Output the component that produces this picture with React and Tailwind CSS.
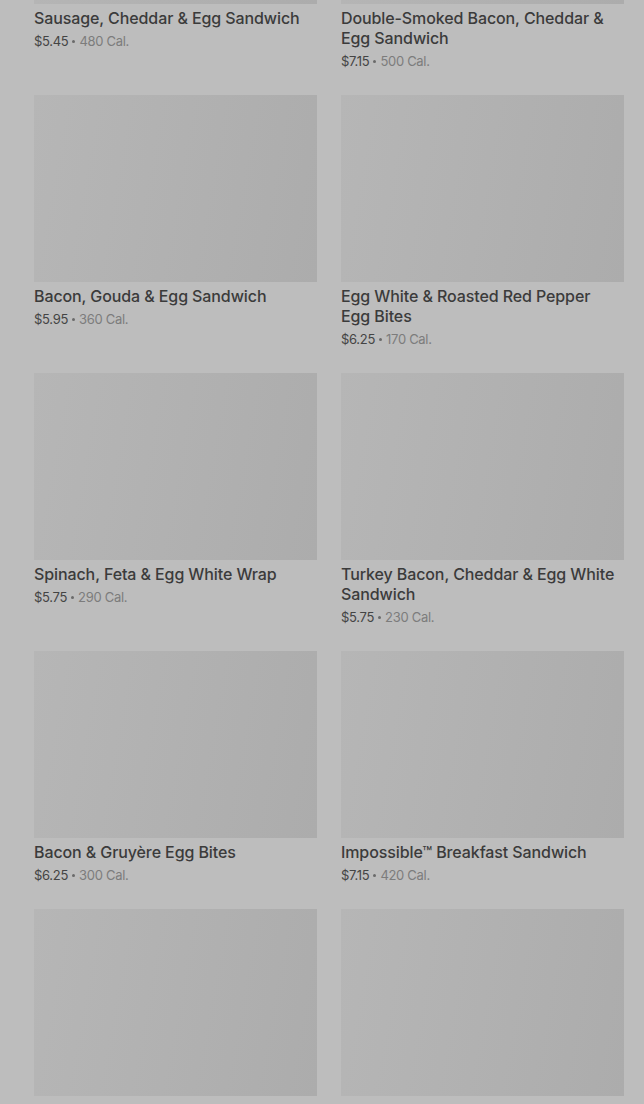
import React from "react";

const items = [
  ["Sausage, Cheddar & Egg Sandwich", "$5.45", "480 Cal."],
  ["Double-Smoked Bacon, Cheddar & Egg Sandwich", "$7.15", "500 Cal."],
  ["Bacon, Gouda & Egg Sandwich", "$5.95", "360 Cal."],
  ["Egg White & Roasted Red Pepper Egg Bites", "$6.25", "170 Cal."],
  ["Spinach, Feta & Egg White Wrap", "$5.75", "290 Cal."],
  ["Turkey Bacon, Cheddar & Egg White Sandwich", "$5.75", "230 Cal."],
  ["Bacon & Gruyère Egg Bites", "$6.25", "300 Cal."],
  ["Impossible™ Breakfast Sandwich", "$7.15", "420 Cal."],
  [null],
  [null],
];

function Card({ name, price, cal }) {
  return (
    <div className="flex flex-col">
      <div className="h-[187px] w-full bg-[linear-gradient(100deg,#b6b6b6_0%,#b1b1b1_50%,#acacac_100%)]" />
      {name && (
        <>
          <div className="mt-[4px] pr-[6px] text-[16px] font-medium leading-[20px] tracking-[-0.1px] text-[#3b3b3b]">
            {name}
          </div>
          <div className="mt-[3px] flex h-[20px] items-center text-[13px] leading-[20px] tracking-[-0.3px]">
            <span className="text-[#444444]">{price}</span>
            <span className="mx-[4px] inline-block h-[3px] w-[3px] rounded-full bg-[#6a6a6a]" />
            <span className="text-[#7c7c7c]">{cal}</span>
          </div>
        </>
      )}
    </div>
  );
}

export default function App() {
  return (
    <div
      className="h-[1104px] w-[644px] overflow-hidden bg-[#bdbdbd]"
      style={{ fontFamily: "Inter, 'Noto Sans', sans-serif" }}
    >
      <div className="-mt-[183px] grid grid-cols-2 gap-x-[24px] gap-y-[24px] pl-[34px] pr-[20px]">
        {items.map((it, i) => (
          <Card key={i} name={it[0]} price={it[1]} cal={it[2]} />
        ))}
      </div>
    </div>
  );
}
